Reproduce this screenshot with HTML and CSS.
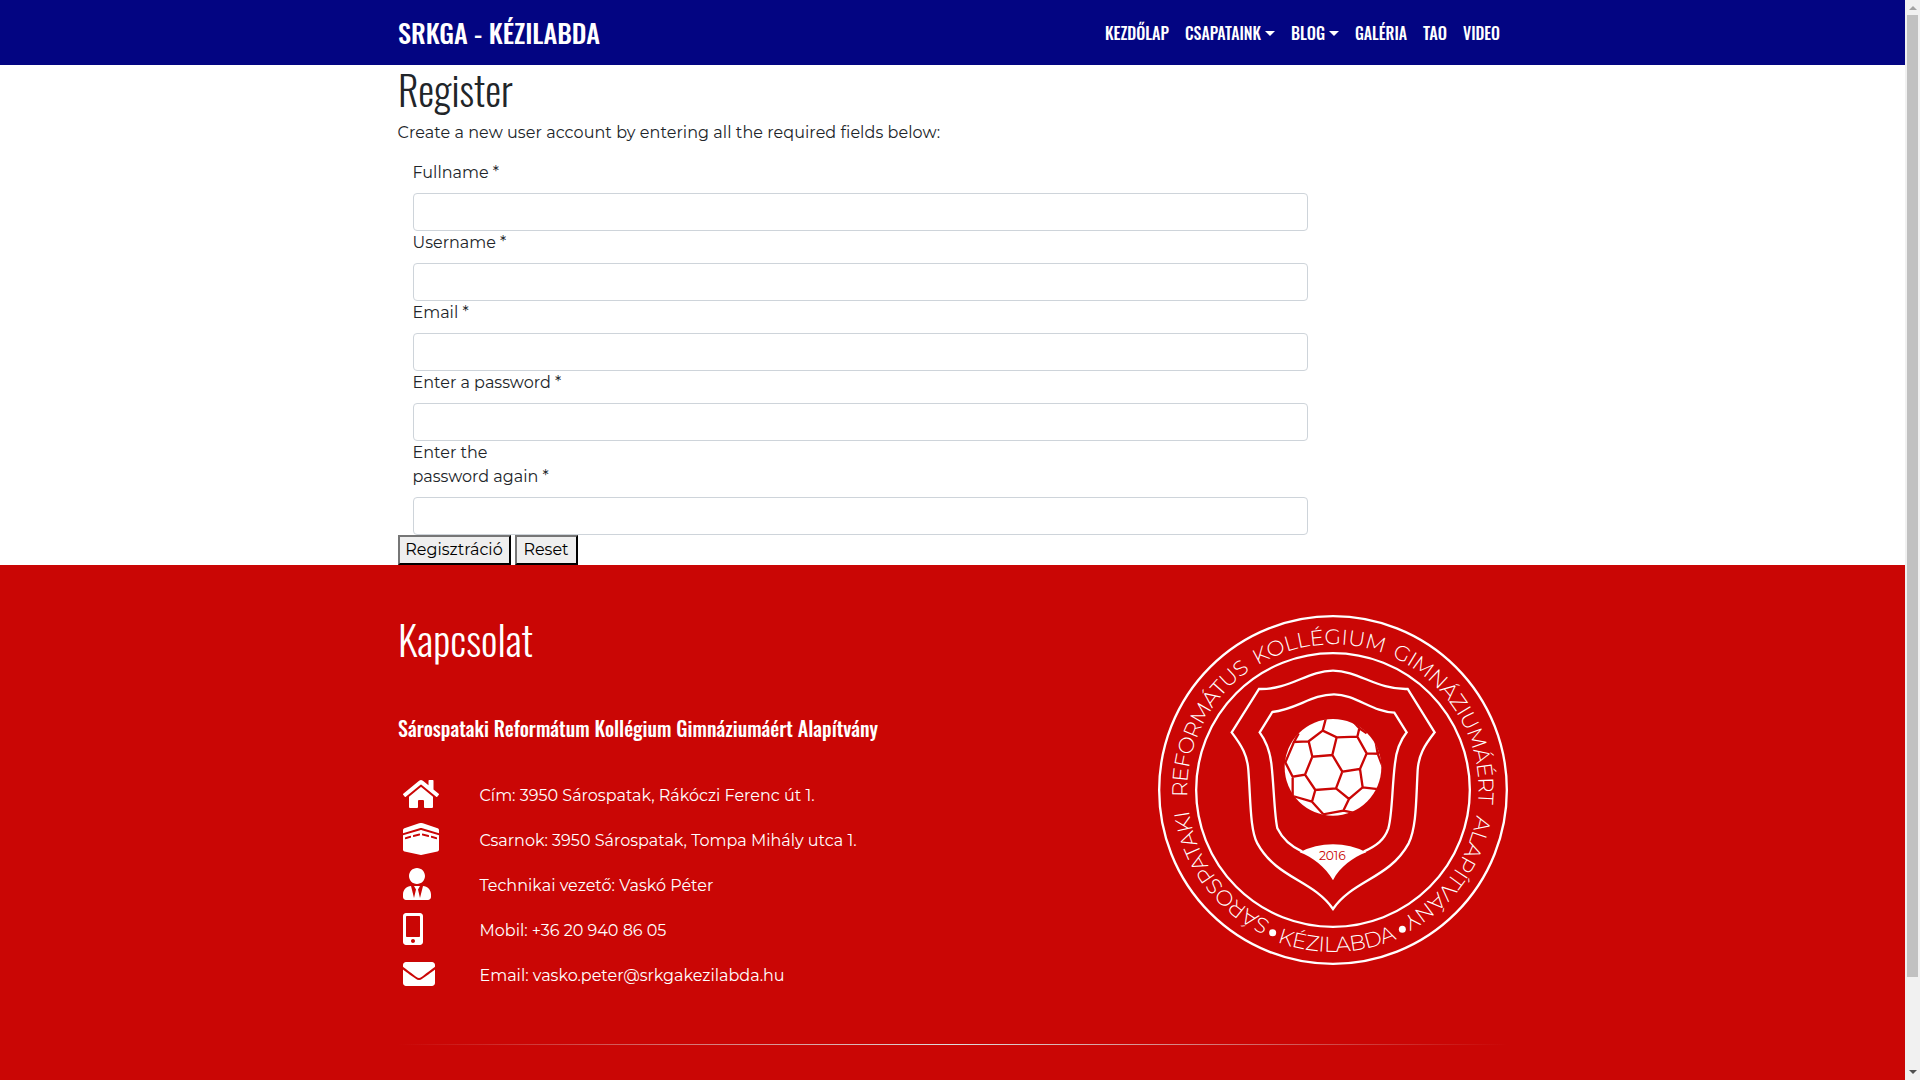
FILE: index.html
```html
<!DOCTYPE html>
<html lang="hu">
<head>
<meta charset="utf-8">
<title>SRKGA - Kézilabda</title>
<link rel="stylesheet" href="styles.css">
</head>
<body>
<div class="page">
  <header class="navbar">
    <div class="container navbar-inner">
      <a class="brand"><svg class="label" width="203" height="65"><text x="0" y="44" textLength="202" lengthAdjust="spacingAndGlyphs">SRKGA - KÉZILABDA</text></svg></a>
      <nav class="menu">
        <a class="link"><svg class="label" width="64" height="65"><text x="0" y="40" textLength="64" lengthAdjust="spacingAndGlyphs">KEZDŐLAP</text></svg></a>
        <a class="link"><svg class="label" width="76" height="65"><text x="0" y="40" textLength="76" lengthAdjust="spacingAndGlyphs">CSAPATAINK</text></svg><i class="caret"></i></a>
        <a class="link"><svg class="label" width="34" height="65"><text x="0" y="40" textLength="34" lengthAdjust="spacingAndGlyphs">BLOG</text></svg><i class="caret"></i></a>
        <a class="link"><svg class="label" width="52" height="65"><text x="0" y="40" textLength="52" lengthAdjust="spacingAndGlyphs">GALÉRIA</text></svg></a>
        <a class="link"><svg class="label" width="24" height="65"><text x="0" y="40" textLength="24" lengthAdjust="spacingAndGlyphs">TAO</text></svg></a>
        <a class="link"><svg class="label" width="37" height="65"><text x="0" y="40" textLength="37" lengthAdjust="spacingAndGlyphs">VIDEO</text></svg></a>
      </nav>
    </div>
  </header>

  <main class="container">
    <h1 class="title"><svg class="label" width="120" height="56"><text x="0" y="42" textLength="115" lengthAdjust="spacingAndGlyphs">Register</text></svg></h1>
    <p class="intro">Create a new user account by entering all the required fields below:</p>
    <form>
      <div class="fields">
        <label for="f1">Fullname *</label><input id="f1" class="control">
        <label for="f2">Username *</label><input id="f2" class="control">
        <label for="f3">Email *</label><input id="f3" class="control">
        <label for="f4">Enter a password *</label><input id="f4" class="control">
        <label for="f5">Enter the<br>password again *</label><input id="f5" class="control">
      </div>
      <div class="buttons">
        <button type="button" class="btn btn-submit">Regisztráció</button>
        <button type="button" class="btn btn-reset">Reset</button>
      </div>
    </form>
  </main>

  <footer class="footer">
    <div class="container">
      <div class="footer-top">
        <section class="contact">
          <h2 class="contact-title"><svg class="label" width="140" height="106"><text x="0" y="42" textLength="135" lengthAdjust="spacingAndGlyphs">Kapcsolat</text></svg></h2>
          <h5 class="contact-org"><svg class="label" width="490" height="50"><text x="0" y="16" textLength="480" lengthAdjust="spacingAndGlyphs">Sárospataki Reformátum Kollégium Gimnáziumáért Alapítvány</text></svg></h5>
          <ul class="contact-list">
            <li><span class="icon"><svg width="36" height="32" viewBox="0 0 576 512"><path d="M280.370 148.260L96 300.110V464a16 16 0 0 0 16 16l112.060-.29a16 16 0 0 0 15.920-16V368a16 16 0 0 1 16-16h64a16 16 0 0 1 16 16v95.640a16 16 0 0 0 16 16.050L464 480a16 16 0 0 0 16-16V300L295.670 148.260a12.190 12.190 0 0 0-15.300 0zM571.600 251.470L488 182.560V44.050a12 12 0 0 0-12-12h-56a12 12 0 0 0-12 12v72.610L318.470 43a48 48 0 0 0-61 0L4.340 251.470a12 12 0 0 0-1.600 16.900l25.500 31A12 12 0 0 0 45.150 301l235.220-193.740a12.190 12.190 0 0 1 15.300 0L530.900 301a12 12 0 0 0 16.900-1.600l25.500-31a12 12 0 0 0-1.700-16.930z"/></svg></span><span>Cím: 3950 Sárospatak, Rákóczi Ferenc út 1.</span></li>
            <li><span class="icon"><svg width="36" height="32" viewBox="0 0 576 512"><path d="M554.120 83.510L318.360 4.930a95.962 95.962 0 0 0-60.710 0L21.880 83.510A32.006 32.006 0 0 0 0 113.870v49.010l265.020-79.510c15.030-4.500 30.920-4.500 45.980 0l265 79.500v-49.010c0-13.770-8.810-26-21.880-30.350zm-279.900 30.520L0 196.300v228.380c0 15 10.420 27.980 25.060 31.240l242.120 53.800a95.937 95.937 0 0 0 41.650 0l242.120-53.800c14.640-3.250 25.060-16.240 25.060-31.240V196.290l-274.200-82.260c-9.040-2.720-18.590-2.720-27.590 0zM128 230.110c0 3.610-2.410 6.770-5.890 7.720l-80 21.820C37.020 261.030 32 257.200 32 251.930v-16.580c0-3.610 2.410-6.770 5.890-7.720l80-21.820c5.090-1.390 10.110 2.440 10.110 7.720v16.580zm144-39.280c0 3.610-2.410 6.770-5.890 7.720l-96 26.180c-5.090 1.390-10.110-2.440-10.110-7.720v-16.580c0-3.610 2.410-6.770 5.890-7.720l96-26.180c5.090-1.390 10.110 2.440 10.110 7.720v16.580zm176 22.700c0-5.280 5.020-9.110 10.110-7.720l80 21.820c3.480.95 5.890 4.110 5.890 7.720v16.580c0 5.280-5.020 9.110-10.110 7.720l-80-21.820a7.997 7.997 0 0 1-5.890-7.720v-16.580zm-144-39.270c0-5.280 5.020-9.110 10.110-7.720l96 26.180c3.480.95 5.890 4.110 5.890 7.720v16.580c0 5.280-5.020 9.110-10.110 7.720l-96-26.180a7.997 7.997 0 0 1-5.890-7.720v-16.580z"/></svg></span><span>Csarnok: 3950 Sárospatak, Tompa Mihály utca 1.</span></li>
            <li><span class="icon"><svg width="28" height="32" viewBox="0 0 448 512"><path d="M224 256c70.700 0 128-57.300 128-128S294.700 0 224 0 96 57.300 96 128s57.300 128 128 128zm95.800 32.600L272 480l-32-136 32-56h-96l32 56-32 136-47.800-191.400C56.900 292 0 350.300 0 422.400V464c0 26.500 21.500 48 48 48h352c26.500 0 48-21.500 48-48v-41.600c0-72.100-56.900-130.400-128.200-133.800z"/></svg></span><span>Technikai vezető: Vaskó Péter</span></li>
            <li><span class="icon"><svg width="20" height="32" viewBox="0 0 320 512"><path d="M272 0H48C21.500 0 0 21.500 0 48v416c0 26.500 21.500 48 48 48h224c26.500 0 48-21.500 48-48V48c0-26.500-21.500-48-48-48zM160 480c-17.700 0-32-14.300-32-32s14.300-32 32-32 32 14.300 32 32-14.300 32-32 32zm112-108c0 6.600-5.400 12-12 12H60c-6.600 0-12-5.400-12-12V60c0-6.600 5.400-12 12-12h200c6.600 0 12 5.400 12 12v312z"/></svg></span><span>Mobil: +36 20 940 86 05</span></li>
            <li><span class="icon"><svg width="32" height="32" viewBox="0 0 512 512"><path d="M502.300 190.800c3.900-3.100 9.700-.2 9.700 4.700V400c0 26.500-21.500 48-48 48H48c-26.500 0-48-21.500-48-48V195.600c0-5 5.700-7.800 9.700-4.700 22.400 17.400 52.100 39.500 154.100 113.600 21.100 15.400 56.700 47.800 92.200 47.600 35.700.3 72-32.800 92.300-47.600 102-74.100 131.600-96.300 154-113.700zM256 320c23.200.4 56.600-29.200 73.400-41.400 132.700-96.300 142.800-104.700 173.400-128.700 5.800-4.500 9.200-11.500 9.200-18.900v-19c0-26.500-21.500-48-48-48H48c-26.500 0-48 21.500-48 48v19c0 7.400 3.400 14.300 9.200 18.900 30.600 23.900 40.700 32.400 173.400 128.700 16.800 12.200 50.200 41.800 73.400 41.400z"/></svg></span><span>Email: vasko.peter@srkgakezilabda.hu</span></li>
          </ul>
        </section>
        <svg class="crest" width="350" height="350" viewBox="54 45 1050 1050">
          <defs>
            <path id="arc-top" d="M579 1007A437 437 0 0 1 579 133A437 437 0 0 1 579 1007"/>
            <path id="arc-bottom" d="M93 570A486 486 0 0 0 1065 570"/>
            <clipPath id="ball"><circle cx="579" cy="502" r="146"/></clipPath>
          </defs>
          <g class="line">
            <circle cx="579" cy="570" r="521.500"/>
            <circle cx="579" cy="570" r="410.500"/>
            <path d="M579 212C502 212 450 270 357 267L275 397C306 438 322 465 325 510C332 600 330 690 352 730C410 836 519 840 579 927C639 840 748 836 806 730C830 680 828 600 833 510C836 465 852 438 884 397L803 267C710 270 656 212 579 212Z"/>
            <path d="M487 755C450 738 425 712 412 685C403 645 402 560 394 490C389 450 380 425 359 397L397 336C470 328 515 283 582 283C645 283 700 337 763 338L800 397C778 425 769 450 765 490C756 560 757 645 745 685C733 720 710 737 671 755"/>
          </g>
          <path class="solid" d="M479 757Q525 733 579 733Q633 733 679 757C640 772 600 800 579 841C555 800 518 772 479 757Z"/>
          <circle class="solid" cx="579" cy="502" r="145"/>
          <g class="seams" clip-path="url(#ball)">
            <path d="M559 350L548 392L590 412L652 410L680 460L660 507L607 515L577 465L517 470L506 424L548 392M590 412L577 465M506 424L462 426L476 400M462 426L436 487L458 530L495 524L517 470M495 524L526 570L588 565L607 515M588 565L627 597L668 562L660 507M668 562L720 568M627 597L610 632L550 643L516 605L526 570M516 605L458 588V530M610 632L650 640M680 460L713 461L706 420M713 461L728 500M713 461L726 450M652 410L658 385L640 365M658 385L680 400"/>
          </g>
          <circle class="solid" cx="398" cy="998" r="10.500"/>
          <circle class="solid" cx="787" cy="988" r="10.500"/>
          <text class="year" x="577" y="779" textLength="80" text-anchor="middle">2016</text>
          <g class="ring">
            <text textLength="432"><textPath href="#arc-top" startOffset="193">SÁROSPATAKI</textPath></text>
            <text textLength="443"><textPath href="#arc-top" startOffset="665">REFORMÁTUS</textPath></text>
            <text textLength="392"><textPath href="#arc-top" startOffset="1135">KOLLÉGIUM</textPath></text>
            <text textLength="548"><textPath href="#arc-top" startOffset="1553">GIMNÁZIUMÁÉRT</textPath></text>
            <text textLength="394"><textPath href="#arc-top" startOffset="2135">ALAPÍTVÁNY</textPath></text>
            <text textLength="368"><textPath href="#arc-bottom" startOffset="592">KÉZILABDA</textPath></text>
          </g>
        </svg>
      </div>
      <hr class="divider">
    </div>
  </footer>
</div>
<aside class="scrollbar"><i class="up"></i><i class="thumb"></i><i class="down"></i></aside>
</body>
</html>
```
FILE: styles.css
```css
* { box-sizing: border-box; }
body {
  margin: 0;
  display: flex;
  width: 1920px;
  height: 1080px;
  overflow: hidden;
  background: #fff;
  color: #212529;
  font: 400 16px/24px Montserrat, Inter, "Noto Sans", sans-serif;
}
h1, h2, h5, p, ul { margin: 0; padding: 0; }
.page { width: 1905px; height: 1080px; overflow: hidden; }
.container { width: 1140px; margin: 0 auto; padding: 0 15px; }

.label { display: block; overflow: visible; font-family: Oswald, Roboto, sans-serif; fill: currentColor; }

.navbar { height: 65px; background: #030582; color: #fff; }
.navbar-inner { display: flex; justify-content: space-between; }
.brand .label { font-size: 26px; font-weight: 500; }
.menu { display: flex; }
.link { display: flex; align-items: center; padding: 0 8px; }
.link .label { font-size: 16px; font-weight: 500; }
.caret {
  margin: 1px 0 0 4px;
  border-top: 5px solid #fff;
  border-left: 5px solid transparent;
  border-right: 5px solid transparent;
}

.title .label { font-size: 40px; font-weight: 300; }
.intro { margin-bottom: 16px; letter-spacing: 0.065px; }
.fields { display: flex; flex-direction: column; width: 925px; padding: 0 15px; }
.fields label { margin-bottom: 8px; }
.control {
  height: 38px;
  border: 1px solid #ced4da;
  border-radius: 4px;
  background: #fff;
}
.buttons { display: flex; gap: 4px; height: 30px; }
.btn {
  height: 30px;
  padding: 0;
  border: 2px outset #767676;
  border-color: #767676 #212121 #212121 #767676;
  background: #efefef;
  color: #000;
  font: inherit;
}
.btn-submit { width: 113px; }
.btn-reset { width: 63px; }

.footer { height: 515px; padding-top: 50px; background: #ca0605; color: #fff; }
.footer-top { display: flex; justify-content: space-between; }
.contact-title .label { font-size: 40px; font-weight: 300; }
.contact-org .label { font-size: 20px; font-weight: 500; }
.contact-list { list-style: none; }
.contact-list li { display: flex; align-items: center; height: 45px; padding-left: 5px; }
.icon { width: 77px; height: 32px; }
.icon svg { display: block; fill: #fff; }
.contact-list li span:last-child { padding-top: 5px; white-space: nowrap; }

.crest { display: block; }
.line { fill: none; stroke: #fff; stroke-width: 7; }
.solid { fill: #fff; }
.seams { fill: none; stroke: #ca0605; stroke-width: 7; }
.year { fill: #ca0605; font: 400 37px Montserrat, Inter, sans-serif; }
.ring { fill: #fff; font: 300 64px Montserrat, Inter, sans-serif; }

.divider {
  height: 1px;
  margin: 48px 0 0;
  border: 0;
  background: linear-gradient(to right, transparent, #ddd, transparent);
}

.scrollbar {
  display: flex;
  flex-direction: column;
  align-items: center;
  width: 15px;
  height: 1080px;
  background: #f1f1f1;
}
.up, .down { border-left: 4px solid transparent; border-right: 4px solid transparent; }
.up { margin: 6px 0 5px; border-bottom: 4px solid #a3a3a3; }
.thumb { width: 11px; height: 962px; background: #c1c1c1; }
.down { margin-top: 93px; border-top: 4px solid #505050; }
```
